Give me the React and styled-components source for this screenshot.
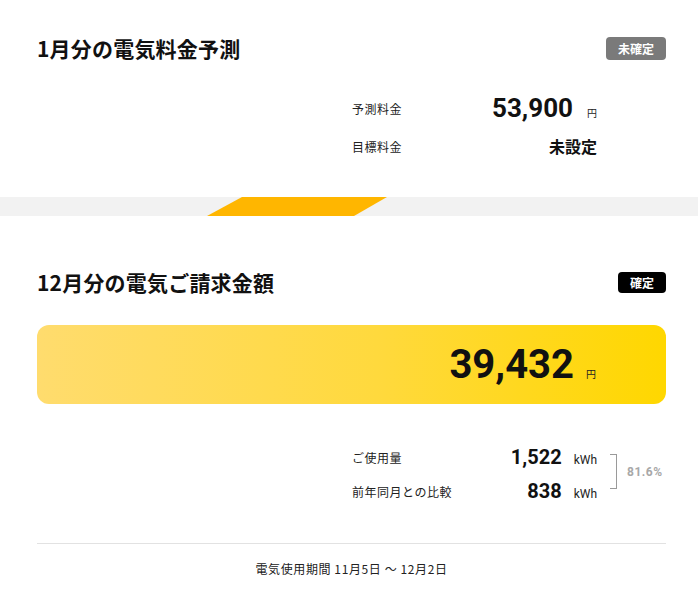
import React from "react";
import styled, { createGlobalStyle } from "styled-components";

const GlobalStyle = createGlobalStyle`
  body {
    margin: 0;
    background: #fff;
    color: #111;
    font-family: "Noto Sans CJK JP", "Noto Sans", sans-serif;
  }
`;

const Page = styled.div`
  width: 698px;
`;

const Section = styled.section`
  box-sizing: border-box;
  padding: ${(p) => p.$pad};
  min-height: ${(p) => p.$minH || "auto"};
`;

const Header = styled.div`
  display: flex;
  align-items: center;
  justify-content: space-between;
  height: 24px;
`;

const Title = styled.h2`
  margin: 0;
  font-size: 21px;
  line-height: 24px;
  font-weight: 700;
  letter-spacing: 0.2px;
  font-family: "Noto Sans CJK JP", sans-serif;
`;

const Badge = styled.span`
  display: inline-flex;
  align-items: center;
  justify-content: center;
  box-sizing: border-box;
  height: ${(p) => (p.$fixed ? "21px" : "23px")};
  padding: 0 12px;
  border-radius: 4px;
  background: ${(p) => (p.$fixed ? "#000" : "#7a7a7a")};
  color: #fff;
  font-size: 12px;
  font-weight: 700;
`;

const Summary = styled.div`
  width: 245px;
  margin: ${(p) => p.$margin};
`;

const Row = styled.div`
  display: flex;
  align-items: center;
  justify-content: space-between;
  height: ${(p) => p.$h || "38px"};
`;

const Label = styled.span`
  font-size: 12px;
  letter-spacing: 0.5px;
  color: #222;
`;

const ValueGroup = styled.span`
  display: inline-flex;
  align-items: baseline;
`;

const Num = styled.span`
  font-family: Roboto, "Liberation Sans", sans-serif;
  font-weight: 700;
  font-size: ${(p) => p.$size};
  line-height: 1;
  color: #111;
`;

const Unit = styled.span`
  font-size: ${(p) => p.$size || "10px"};
  margin-left: ${(p) => p.$gap || "14px"};
  font-family: ${(p) => (p.$latin ? 'Roboto, "Liberation Sans", sans-serif' : '"Noto Sans CJK JP", sans-serif')};
  color: #222;
`;

const TextValue = styled.span`
  font-size: 16px;
  font-weight: 700;
`;

const Band = styled.div`
  height: 19px;
  background: #f2f2f2;
  display: flex;
`;

const Slash = styled.div`
  width: 180px;
  margin-left: 207px;
  background: #ffb600;
  clip-path: polygon(35px 0, 100% 0, calc(100% - 33px) 100%, 0 100%);
`;

const Card = styled.div`
  margin-top: 31px;
  height: 79px;
  border-radius: 12px;
  background: linear-gradient(90deg, #ffdc6e 0%, #ffd93c 55%, #ffd700 100%);
  display: flex;
  align-items: center;
  justify-content: flex-end;
  padding-right: 70px;
`;

const Usage = styled.div`
  display: flex;
  align-items: center;
  margin: 36px 0 0 315px;
`;

const Bracket = styled.div`
  width: 6px;
  height: 33px;
  margin-left: 13px;
  border: 1px solid #9a9a9a;
  border-left: none;
  margin-top: -5px;
`;

const Percent = styled.span`
  margin-left: 10px;
  margin-top: -5px;
  font-family: Roboto, "Liberation Sans", sans-serif;
  font-size: 12px;
  font-weight: 700;
  color: #a8a8a8;
  letter-spacing: 0.5px;
`;

const Divider = styled.hr`
  margin: 35px 0 0;
  border: none;
  border-top: 1px solid #e2e2e2;
`;

const Period = styled.p`
  margin: 17px 0 0;
  text-align: center;
  font-size: 12px;
  line-height: 16px;
  letter-spacing: 0.6px;
  color: #222;
`;

export default function App() {
  return (
    <Page>
      <GlobalStyle />
      <Section $pad="36px 32px 0 37px" $minH="197px">
        <Header>
          <Title>1月分の電気料金予測</Title>
          <Badge>未確定</Badge>
        </Header>
        <Summary $margin="29px 0 0 315px">
          <Row>
            <Label>予測料金</Label>
            <ValueGroup>
              <Num $size="26px">53,900</Num>
              <Unit>円</Unit>
            </ValueGroup>
          </Row>
          <Row>
            <Label>目標料金</Label>
            <TextValue>未設定</TextValue>
          </Row>
        </Summary>
      </Section>

      <Band>
        <Slash />
      </Band>

      <Section $pad="54px 32px 30px 37px">
        <Header>
          <Title>12月分の電気ご請求金額</Title>
          <Badge $fixed>確定</Badge>
        </Header>
        <Card>
          <ValueGroup>
            <Num $size="40px">39,432</Num>
            <Unit $gap="12px">円</Unit>
          </ValueGroup>
        </Card>
        <Usage>
          <Summary $margin="0">
            <Row $h="34px">
              <Label>ご使用量</Label>
              <ValueGroup>
                <Num $size="20px">1,522</Num>
                <Unit $latin $size="12px" $gap="12px">kWh</Unit>
              </ValueGroup>
            </Row>
            <Row $h="34px">
              <Label>前年同月との比較</Label>
              <ValueGroup>
                <Num $size="20px">838</Num>
                <Unit $latin $size="12px" $gap="12px">kWh</Unit>
              </ValueGroup>
            </Row>
          </Summary>
          <Bracket />
          <Percent>81.6%</Percent>
        </Usage>
        <Divider />
        <Period>電気使用期間 11月5日 〜 12月2日</Period>
      </Section>
    </Page>
  );
}
